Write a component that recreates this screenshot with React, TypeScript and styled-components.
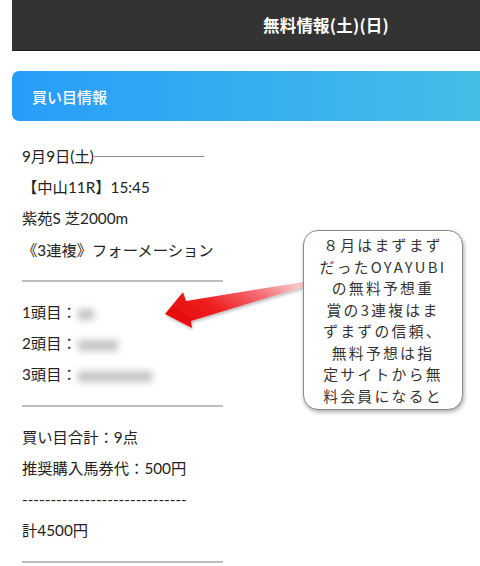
import React from "react";
import styled, { createGlobalStyle } from "styled-components";

const Global = createGlobalStyle`
  html, body { margin: 0; padding: 0; background: #fff; overflow: hidden; }
  body { font-family: "Lato", "Noto Sans CJK JP", sans-serif; color: #222; }
`;

const Page = styled.div`
  position: relative;
  width: 628px;
  padding-left: 12px;
`;

const Header = styled.header`
  height: 50px;
  background: #333;
  border-bottom: 1px solid #1e1e1e;
  display: flex;
  align-items: center;
  justify-content: center;
`;

const Title = styled.h1`
  margin: 0;
  color: #fff;
  font-family: "Noto Sans CJK JP", sans-serif;
  font-size: 16.5px;
  font-weight: 700;
  letter-spacing: 0.2px;
`;

const SectionBar = styled.div`
  margin-top: 20px;
  height: 50px;
  border-radius: 7px 0 0 7px;
  background: linear-gradient(90deg, #279df9 0%, #45bde6 74%, #4cc4e2 100%);
  display: flex;
  align-items: center;
  padding-left: 20px;
`;

const SectionTitle = styled.h2`
  margin: 0;
  color: #fff;
  font-family: "Noto Sans CJK JP", sans-serif;
  font-size: 15px;
  font-weight: 500;
`;

const Content = styled.div`
  padding: 20px 0 0 10px;
  font-size: 15.3px;
`;

const Line = styled.div`
  line-height: 31.2px;
  height: 31.2px;
  white-space: nowrap;
`;

const Dash = styled.span`
  display: inline-block;
  width: 110px;
  border-top: 1px solid #8c8c8c;
  vertical-align: middle;
  margin-top: -3px;
`;

const Rule = styled.div`
  height: 31.2px;
  width: 201px;
  display: flex;
  align-items: center;
  &::before {
    content: "";
    display: block;
    width: 100%;
    height: 2px;
    background: #bdbdbd;
  }
`;

const Hidden = styled.span<{ $w: number }>`
  display: inline-block;
  width: ${(p) => p.$w}px;
  height: 11px;
  background: #c4c4c4;
  filter: blur(3.5px);
  vertical-align: middle;
  margin-left: 1px;
`;

const Callout = styled.div`
  position: absolute;
  left: 303px;
  top: 230px;
  width: 160px;
  height: 180px;
  box-sizing: border-box;
  border: 1px solid #8a8a8a;
  border-radius: 15px;
  background: #fff;
  box-shadow: 1px 2px 4px rgba(0, 0, 0, 0.35);
  padding-top: 3px;
  text-align: center;
  font-family: "Noto Sans CJK JP", sans-serif;
  font-size: 14.8px;
  line-height: 21.5px;
  letter-spacing: 2.3px;
  color: #333;
`;

const CalloutLine = styled.div`
  height: 21.5px;
  white-space: nowrap;
`;

const ArrowSvg = styled.svg`
  position: absolute;
  left: 160px;
  top: 275px;
  overflow: visible;
`;

const calloutLines = [
  "８月はまずまず",
  "だったOYAYUBI",
  "の無料予想重",
  "賞の3連複はま",
  "ずまずの信頼、",
  "無料予想は指",
  "定サイトから無",
  "料会員になると",
];

export default function App() {
  return (
    <>
      <Global />
      <Page>
        <Header>
          <Title>無料情報(土)(日)</Title>
        </Header>
        <SectionBar>
          <SectionTitle>買い目情報</SectionTitle>
        </SectionBar>
        <Content>
          <Line>
            9月9日(土)<Dash />
          </Line>
          <Line>【中山11R】15:45</Line>
          <Line>紫苑S 芝2000m</Line>
          <Line>《3連複》フォーメーション</Line>
          <Rule />
          <Line>
            1頭目：<Hidden $w={16} />
          </Line>
          <Line>
            2頭目：<Hidden $w={40} />
          </Line>
          <Line>
            3頭目：<Hidden $w={74} />
          </Line>
          <Rule />
          <Line>買い目合計：9点</Line>
          <Line>推奨購入馬券代：500円</Line>
          <Line>-----------------------------</Line>
          <Line>計4500円</Line>
          <Rule />
        </Content>
        <ArrowSvg width="145" height="60" viewBox="0 0 145 60">
          <defs>
            <linearGradient id="arrowGrad" x1="0" y1="0.7" x2="1" y2="0.2">
              <stop offset="0" stopColor="#e60a0a" />
              <stop offset="0.35" stopColor="#ee2020" />
              <stop offset="0.75" stopColor="#f4747a" />
              <stop offset="1" stopColor="#f9c4c8" />
            </linearGradient>
            <filter id="arrowShadow" x="-10%" y="-20%" width="130%" height="160%">
              <feDropShadow dx="1" dy="2" stdDeviation="1.5" floodColor="#000" floodOpacity="0.25" />
            </filter>
          </defs>
          <polygon
            filter="url(#arrowShadow)"
            fill="url(#arrowGrad)"
            points="5,39 23,17 26,26 143,7 143,12 31,46 32,53"
          />
        </ArrowSvg>
        <Callout>
          {calloutLines.map((l) => (
            <CalloutLine key={l}>{l}</CalloutLine>
          ))}
        </Callout>
      </Page>
    </>
  );
}
